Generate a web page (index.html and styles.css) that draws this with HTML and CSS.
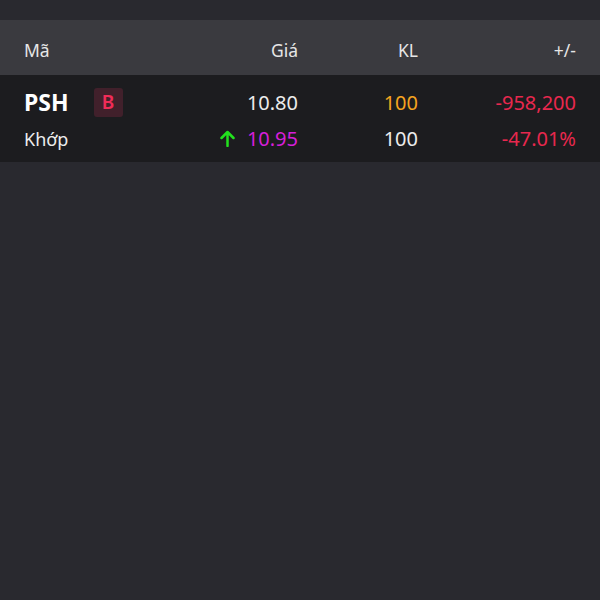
FILE: index.html
```html
<!DOCTYPE html>
<html lang="vi">
<head>
  <meta charset="UTF-8">
  <meta name="viewport" content="width=device-width, initial-scale=1.0">
  <title>Lệnh khớp</title>
  <link rel="stylesheet" href="styles.css">
</head>
<body>
  <div class="screen">
    <div class="topbar"></div>

    <div class="table-head">
      <span class="col-code">Mã</span>
      <span class="col-num">Giá</span>
      <span class="col-num">KL</span>
      <span class="col-num">+/-</span>
    </div>

    <div class="order-row">
      <div class="code-cell">
        <span class="ticker">PSH</span>
        <span class="side-badge">B</span>
      </div>
      <span class="col-num">10.80</span>
      <span class="col-num orange">100</span>
      <span class="col-num red">-958,200</span>

      <span class="status">Khớp</span>
      <span class="col-num match-price">
        <svg class="arrow-up" width="15" height="17" viewBox="0 0 15 17">
          <path d="M7.5 16V2M1.5 8L7.5 2l6 6" fill="none" stroke="#22e11e" stroke-width="2.5" stroke-linecap="round" stroke-linejoin="round"/>
        </svg>
        <span class="magenta">10.95</span>
      </span>
      <span class="col-num">100</span>
      <span class="col-num red">-47.01%</span>
    </div>
  </div>
</body>
</html>
```

FILE: styles.css
```css
* {
  box-sizing: border-box;
  margin: 0;
  padding: 0;
}
html, body {
  height: 100%;
}
body {
  background: #29292f;
  font-family: 'Noto Sans', 'Open Sans', sans-serif;
  color: #ececec;
}
.screen {
  display: flex;
  flex-direction: column;
}
.topbar {
  height: 20px;
}
.table-head,
.order-row {
  display: grid;
  grid-template-columns: 154px 120px 120px 158px;
  padding: 0 24px;
  align-items: center;
}
.table-head {
  height: 55px;
  padding-top: 4px;
  background: #3a3a3f;
  font-size: 17.5px;
  color: #e6e6e6;
}
.order-row {
  height: 87px;
  padding-top: 9px;
  background: #1c1c1f;
  grid-template-rows: 36px 37px;
  align-content: start;
  font-size: 20px;
}
.col-num {
  text-align: right;
}
.code-cell {
  display: flex;
  align-items: center;
  gap: 25px;
}
.ticker {
  font-size: 23px;
  font-weight: 700;
  color: #ffffff;
}
.side-badge {
  width: 29px;
  height: 29px;
  border-radius: 3px;
  background: #41202b;
  color: #f02c58;
  font-size: 19px;
  font-weight: 600;
  display: flex;
  align-items: center;
  justify-content: center;
}
.status {
  font-size: 18px;
}
.match-price {
  display: flex;
  justify-content: flex-end;
  align-items: center;
  gap: 12px;
}
.orange {
  color: #f4a41f;
}
.red {
  color: #e8284e;
}
.magenta {
  color: #d71fd9;
}
```
